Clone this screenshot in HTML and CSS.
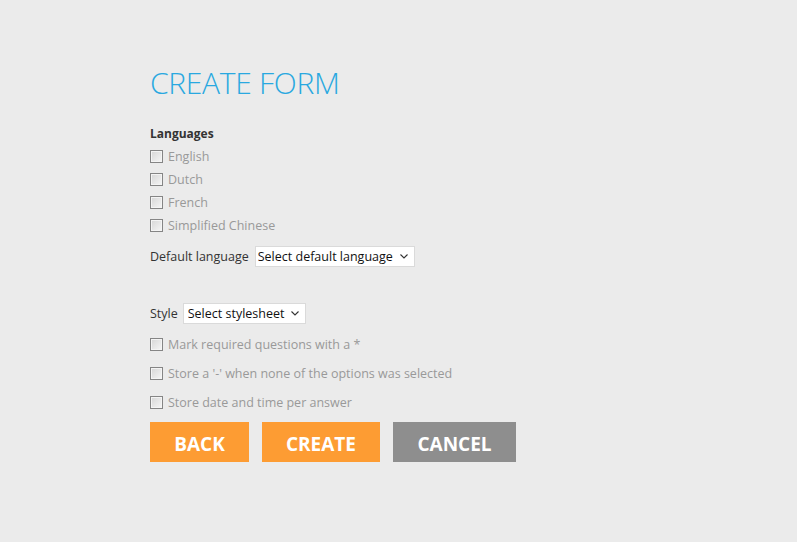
FILE: index.html
```html
<!DOCTYPE html>
<html>
<head>
<meta charset="utf-8">
<link rel="stylesheet" href="styles.css">
</head>
<body>
<div class="page">
  <h1 class="title">CREATE FORM</h1>
  <div class="section-label">Languages</div>
  <div class="lang-list">
    <label class="check"><input type="checkbox" class="box"><span>English</span></label>
    <label class="check"><input type="checkbox" class="box"><span>Dutch</span></label>
    <label class="check"><input type="checkbox" class="box"><span>French</span></label>
    <label class="check"><input type="checkbox" class="box"><span>Simplified Chinese</span></label>
  </div>
  <div class="field default-lang">
    <span class="field-label">Default language</span>
    <span class="select-wrap">
      <select class="select"><option>Select default language</option></select>
      <svg class="chev" width="8" height="5" viewBox="0 0 8 5"><path d="M0.5 0.5 L4 4 L7.5 0.5" fill="none" stroke="#333" stroke-width="1.1"/></svg>
    </span>
  </div>
  <div class="field style-field">
    <span class="field-label">Style</span>
    <span class="select-wrap">
      <select class="select"><option>Select stylesheet</option></select>
      <svg class="chev" width="8" height="5" viewBox="0 0 8 5"><path d="M0.5 0.5 L4 4 L7.5 0.5" fill="none" stroke="#333" stroke-width="1.1"/></svg>
    </span>
  </div>
  <div class="opt-list">
    <label class="check"><input type="checkbox" class="box"><span>Mark required questions with a *</span></label>
    <label class="check"><input type="checkbox" class="box"><span>Store a '-' when none of the options was selected</span></label>
    <label class="check"><input type="checkbox" class="box"><span>Store date and time per answer</span></label>
  </div>
  <div class="buttons">
    <button class="btn btn-orange btn-back">BACK</button>
    <button class="btn btn-orange btn-create">CREATE</button>
    <button class="btn btn-gray btn-cancel">CANCEL</button>
  </div>
</div>
</body>
</html>
```
FILE: styles.css
```css
html, body {
  margin: 0;
  padding: 0;
  background: #ebebeb;
}
body {
  font-family: "Open Sans", "Noto Sans", sans-serif;
  font-size: 12.5px;
  color: #333;
}
.page {
  padding: 62px 0 0 150px;
}
.title {
  margin: 0;
  font-weight: 300;
  font-size: 30px;
  line-height: 42px;
  color: #29a8e0;
  letter-spacing: -0.3px;
}
.section-label {
  margin-top: 21px;
  font-weight: 700;
  font-size: 12px;
  line-height: 17px;
  color: #333;
}
.lang-list {
  margin-top: 6px;
  display: flex;
  flex-direction: column;
  gap: 6px;
}
.check {
  display: flex;
  align-items: center;
  gap: 5px;
  color: #999;
  line-height: 17px;
}
.box {
  appearance: none;
  -webkit-appearance: none;
  margin: 0;
  width: 13px;
  height: 13px;
  border: 1px solid #858585;
  background: linear-gradient(135deg, #d6d6d6, #f6f6f6);
  box-shadow: inset 0 0 0 1px #f4f4f4;
  box-sizing: border-box;
}
.field {
  display: flex;
  align-items: center;
  gap: 6px;
}
.default-lang {
  margin-top: 12px;
}
.style-field {
  margin-top: 36px;
}
.field-label {
  color: #333;
}
.select-wrap {
  position: relative;
  display: inline-block;
}
.select {
  appearance: none;
  -webkit-appearance: none;
  font-family: inherit;
  font-size: 12.5px;
  color: #111;
  background: #fff;
  border: 1px solid #dadada;
  height: 21px;
  padding: 0 20px 0 4px;
  margin: 0;
  border-radius: 0;
  display: block;
}
.default-lang .select { width: 160px; padding-left: 2px; }
.style-field .select { width: auto; }
.style-field { gap: 5px; }
.chev {
  position: absolute;
  right: 7px;
  top: 8px;
  pointer-events: none;
}
.opt-list {
  margin-top: 12px;
  display: flex;
  flex-direction: column;
  gap: 12px;
}
.buttons {
  margin-top: 11px;
  display: flex;
  gap: 13px;
}
.btn {
  border: none;
  margin: 0;
  height: 40px;
  font-family: inherit;
  font-weight: 700;
  font-size: 19px;
  color: #fff;
  cursor: pointer;
  padding: 3px 0 0;
}
.btn-orange { background: #fd9c33; }
.btn-gray { background: #8e8e8e; }
.btn-back { width: 99px; }
.btn-create { width: 118px; }
.btn-cancel { width: 123px; }
```
